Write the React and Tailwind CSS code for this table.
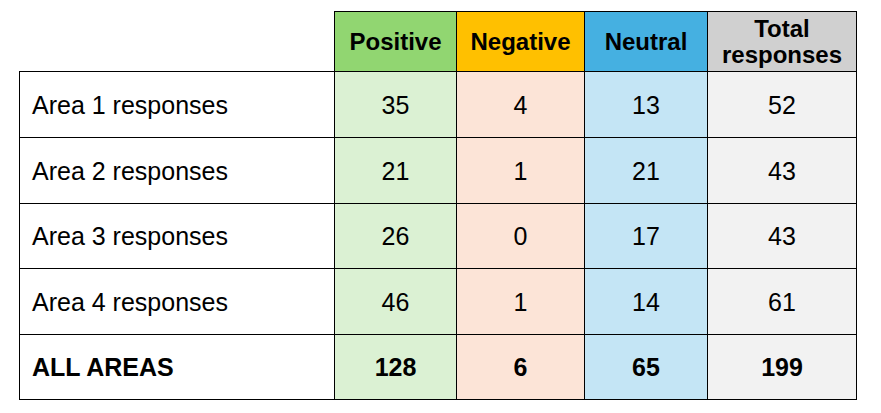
import React from 'react';

const rows = [
  { label: 'Area 1 responses', values: [35, 4, 13, 52] },
  { label: 'Area 2 responses', values: [21, 1, 21, 43] },
  { label: 'Area 3 responses', values: [26, 0, 17, 43] },
  { label: 'Area 4 responses', values: [46, 1, 14, 61] },
];

const total = { label: 'ALL AREAS', values: [128, 6, 65, 199] };

// body fill for each data column
const fills = ['bg-[#dbf1d3]', 'bg-[#fce4d7]', 'bg-[#c4e5f5]', 'bg-[#f2f2f2]'];
const heights = ['h-[66px]', 'h-[66px]', 'h-[65px]', 'h-[66px]'];

export default function App() {
  const renderRow = (row, bold, h) => (
    <tr key={row.label} className={h}>
      <td className={`border border-black pl-3 pt-[2px] text-left ${bold ? 'font-bold' : ''}`}>{row.label}</td>
      {row.values.map((v, i) => (
        <td key={i} className={`border border-black pt-[2px] text-center ${fills[i]} ${bold ? 'font-bold' : ''}`}>
          {v}
        </td>
      ))}
    </tr>
  );

  return (
    <div className="w-[881px] h-[413px] bg-white pt-[11px] pl-[19px] text-black text-[25px] font-['Liberation_Sans',Arial,sans-serif]">
      <table className="border-collapse table-fixed">
        <colgroup>
          <col className="w-[315px]" />
          <col className="w-[122px]" />
          <col className="w-[128px]" />
          <col className="w-[123px]" />
          <col className="w-[149px]" />
        </colgroup>
        <thead>
          <tr className="h-[60px] font-bold text-[24px]">
            <th className="p-0"></th>
            <th className="border border-black bg-[#91d671] text-center">Positive</th>
            <th className="border border-black bg-[#ffc000] text-center">Negative</th>
            <th className="border border-black bg-[#45b0e1] text-center">Neutral</th>
            <th className="border border-black bg-[#d0d0d0] text-center leading-[26px]">
              Total
              <br />
              responses
            </th>
          </tr>
        </thead>
        <tbody>
          {rows.map((r, i) => renderRow(r, false, heights[i]))}
          {renderRow(total, true, 'h-[65px]')}
        </tbody>
      </table>
    </div>
  );
}
